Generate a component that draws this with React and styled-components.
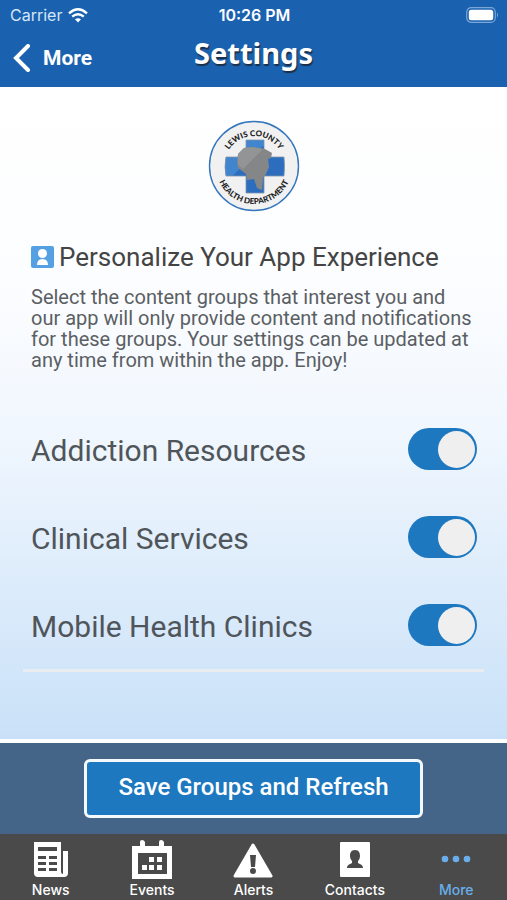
import React, { useState } from "react";
import styled, { createGlobalStyle } from "styled-components";

const color = {
  header: "#1a62b0",
  primary: "#1d78c0",
  panel: "#456588",
  tabbar: "#4a4a4a",
  active: "#69aeea",
  text: "#50555a",
};

const textFont = `Roboto, "Open Sans", sans-serif`;
const titleFont = `"Noto Sans", "Open Sans", sans-serif`;
const systemFont = `Inter, "Liberation Sans", sans-serif`;

const GlobalStyle = createGlobalStyle`
  * {
    box-sizing: border-box;
  }
  body {
    margin: 0;
    font-family: ${textFont};
    color: ${color.text};
  }
`;

const Page = styled.div`
  display: flex;
  flex-direction: column;
  min-height: 100vh;
`;

const Header = styled.header`
  padding-bottom: 8px;
  background: ${color.header};
  color: white;
`;

const StatusBar = styled.div`
  display: grid;
  grid-template-columns: 1fr auto 1fr;
  align-items: center;
  height: 30px;
  padding: 0 8px 0 10px;
  font: 600 16px/30px ${systemFont};
`;

const Carrier = styled.span`
  display: flex;
  align-items: center;
  gap: 6px;
  font-weight: 400;
  color: #d5e6f8;
`;

const Battery = styled.svg`
  justify-self: end;
`;

const NavBar = styled.div`
  display: grid;
  grid-template-columns: 1fr auto 1fr;
  align-items: center;
  height: 49px;
  padding: 0 13px;
`;

const BackButton = styled.button`
  display: flex;
  align-items: center;
  justify-self: start;
  gap: 12px;
  margin-top: 6px;
  padding: 0;
  border: 0;
  background: none;
  color: white;
  font: 700 21px/32px ${textFont};
  cursor: pointer;
`;

const Title = styled.h1`
  margin: 0;
  padding-bottom: 4px;
  font: 700 29px/44px ${titleFont};
  text-shadow: 1px 2px 1px #1c2f48;
`;

const Main = styled.main`
  flex: 1;
  padding: 33px 23px 24px;
  background: linear-gradient(#ffffff 0%, #fcfdff 30%, #f1f7fe 52%, #c9e1f8 100%);
`;

const Seal = styled.svg`
  display: block;
  margin: 0 auto;
`;

const Intro = styled.section`
  padding: 29px 8px 0;
`;

const Heading = styled.h2`
  display: flex;
  align-items: center;
  gap: 5px;
  margin: 0;
  color: #444;
  font: 400 26px/32px ${textFont};
  white-space: nowrap;
`;

const Text = styled.p`
  margin: 14px 0 0;
  color: #5b5f63;
  font: 400 20px/21px ${textFont};
`;

const Groups = styled.div`
  margin-top: 34px;
  border-bottom: 3px solid #e9edf2;
`;

const GroupRow = styled.label`
  display: flex;
  align-items: center;
  justify-content: space-between;
  height: 88px;
  padding: 0 7px 0 8px;
  font: 400 30px/40px ${textFont};
  cursor: pointer;
`;

const GroupName = styled.span`
  padding-top: 3px;
`;

const Switch = styled.input`
  appearance: none;
  display: flex;
  align-items: center;
  width: 69px;
  height: 42px;
  margin: 0;
  padding: 0 2px;
  border-radius: 21px;
  background: #b5bcc4;
  cursor: pointer;

  &::before {
    content: "";
    width: 37px;
    height: 37px;
    border-radius: 50%;
    background: #efefef;
  }

  &:checked {
    justify-content: flex-end;
    background: ${color.primary};
  }
`;

const SavePanel = styled.div`
  display: flex;
  justify-content: center;
  padding: 16px 0;
  border-top: 4px solid white;
  background: ${color.panel};
`;

const SaveButton = styled.button`
  width: 67%;
  height: 59px;
  padding: 0 0 4px;
  border: 3px solid #f4f9fe;
  border-radius: 6px;
  background: ${color.primary};
  color: white;
  font: 500 24px/32px ${textFont};
  cursor: pointer;
`;

const TabBar = styled.nav`
  display: grid;
  grid-template-columns: repeat(5, 1fr);
  height: 66px;
  background: ${color.tabbar};
`;

const Tab = styled.a`
  display: flex;
  flex-direction: column;
  align-items: center;
  gap: 1px;
  padding-top: 5px;
  color: ${(props) => (props.$active ? color.active : "#fff")};
  font: 500 14px/16px ${systemFont};
  text-decoration: none;
`;

function CountySeal() {
  return (
    <Seal width="92" height="92" viewBox="0 0 92 92" role="img" aria-label="Lewis County Health Department">
      <defs>
        <path id="sealTop" d="M16 46a30 30 0 0 1 60 0" />
        <path id="sealBottom" d="M8 46a38 38 0 0 0 76 0" />
        <clipPath id="sealCross">
          <path d="M38 20h18v17h20q1 9 0 19H56v17H38V56H18q-2-9 0-19h20z" />
        </clipPath>
      </defs>
      <circle cx="46" cy="46" r="44.5" fill="#f1f1f2" stroke="#3476bd" strokeWidth="1.4" />
      <g clipPath="url(#sealCross)">
        <path d="M10 15h72v60H10z" fill="#2c6ebd" />
        <path d="M10 15h56L10 70z" fill="#4285cf" />
      </g>
      <path
        d="M38 20h18v17h20q1 9 0 19H56v17H38V56H18q-2-9 0-19h20z"
        fill="none"
        stroke="#8296aa"
        strokeWidth="0.8"
      />
      <path
        d="M30 34l6-6 8-1 13 2 7 4-1 5-3 1 1 8-3 7-3 4-1 12-5-2-3-9-7 1-1-6-8-6-1-6z"
        fill="#858688"
      />
      <path d="M30 34l6-6 8-1 11 2-20 20-5-4z" fill="#929496" />
      <g fill="#202020" fontFamily="Lato, sans-serif" fontSize="8" fontWeight="900" textAnchor="middle">
        <text>
          <textPath href="#sealTop" startOffset="50%">LEWIS COUNTY</textPath>
        </text>
        <text>
          <textPath href="#sealBottom" startOffset="50%">HEALTH DEPARTMENT</textPath>
        </text>
      </g>
    </Seal>
  );
}

const NewsIcon = () => (
  <svg width="36" height="42" viewBox="0 0 36 42">
    <path fill="#fff" d="M1 3h27v29q0 3 2 3v-23h5v22q0 4-4 4H5q-4 0-4-4z" />
    <path
      fill={color.tabbar}
      d="M5 8h19v4H5zM5 17h8v3H5zM16 17h8v3h-8zM5 23h8v3H5zM16 23h8v3h-8zM5 29h8v3H5zM16 29h8v3h-8z"
    />
  </svg>
);

const EventsIcon = () => (
  <svg width="40" height="42" viewBox="0 0 40 42">
    <path fill="#fff" d="M0 7h8V3q0-2 2-2t3 2v4h14V3q0-2 2-2t3 2v4h8v33H0z" />
    <path fill={color.tabbar} d="M6 14h29v21H6z" />
    <path fill="#fff" d="M17 18h5v5h-5zM25 18h5v5h-5zM10 26h5v5h-5zM17 26h5v5h-5zM25 26h5v5h-5z" />
  </svg>
);

const AlertsIcon = () => (
  <svg width="40" height="42" viewBox="0 0 40 42">
    <path fill="#fff" stroke="#fff" strokeWidth="3" strokeLinejoin="round" d="M20 6l18 31H2z" />
    <path fill={color.tabbar} d="M17 16h6l-1 12h-4z" />
    <circle cx="20" cy="32" r="3" fill={color.tabbar} />
  </svg>
);

const ContactsIcon = () => (
  <svg width="30" height="42" viewBox="0 0 30 42">
    <rect y="3" width="30" height="35" rx="1" fill="#fff" />
    <path
      fill={color.tabbar}
      d="M15 11c4 0 5 3 5 6 0 2-1 4-2 5v2c1 1 5 1 5 5H7c0-4 4-4 5-5v-2c-1-1-2-3-2-5 0-3 1-6 5-6z"
    />
  </svg>
);

const MoreIcon = () => (
  <svg width="30" height="42" viewBox="0 0 30 42" fill={color.active}>
    <circle cx="4" cy="20" r="3.3" />
    <circle cx="15" cy="20" r="3.3" />
    <circle cx="26" cy="20" r="3.3" />
  </svg>
);

const tabs = [
  { label: "News", icon: <NewsIcon /> },
  { label: "Events", icon: <EventsIcon /> },
  { label: "Alerts", icon: <AlertsIcon /> },
  { label: "Contacts", icon: <ContactsIcon /> },
  { label: "More", icon: <MoreIcon />, active: true },
];

export default function App() {
  const [groups, setGroups] = useState({
    "Addiction Resources": true,
    "Clinical Services": true,
    "Mobile Health Clinics": true,
  });

  const toggle = (name) => setGroups({ ...groups, [name]: !groups[name] });

  return (
    <Page>
      <GlobalStyle />
      <Header>
        <StatusBar>
          <Carrier>
            Carrier
            <svg width="20" height="15" viewBox="0 0 20 15" fill="none" stroke="#fff" strokeWidth="2.4">
              <path d="M1 5.3q9-8 18 0M4.2 8.7q5.8-5 11.6 0" />
              <path d="M10 14.5l-3-3.2q3-2.2 6 0z" fill="#fff" stroke="none" />
            </svg>
          </Carrier>
          <span>10:26 PM</span>
          <Battery width="33" height="16" viewBox="0 0 33 16">
            <rect x="0.7" y="0.7" width="28.6" height="14.6" rx="4.5" fill="none" stroke="#7ba6d8" strokeWidth="1.2" />
            <rect x="2.8" y="2.8" width="24.4" height="10.4" rx="2.5" fill="#fff" />
            <path d="M31 5.5q2 2.5 0 5z" fill="#7ba6d8" />
          </Battery>
        </StatusBar>
        <NavBar>
          <BackButton type="button">
            <svg width="18" height="28" viewBox="0 0 18 28" fill="none" stroke="#fff" strokeWidth="4">
              <path d="M15 2L3 14l12 12" strokeLinecap="round" />
            </svg>
            More
          </BackButton>
          <Title>Settings</Title>
        </NavBar>
      </Header>
      <Main>
        <CountySeal />
        <Intro>
          <Heading>
            <svg width="23" height="22" viewBox="0 0 23 22">
              <rect width="23" height="22" rx="2" fill="#559fe3" />
              <circle cx="11.5" cy="7.5" r="4.5" fill="#fff" />
              <path d="M6 19q0-6 5.5-6t5.5 6z" fill="#fff" />
            </svg>
            Personalize Your App Experience
          </Heading>
          <Text>
            Select the content groups that interest you and our app will only provide content and notifications for
            these groups. Your settings can be updated at any time from within the app. Enjoy!
          </Text>
        </Intro>
        <Groups>
          {Object.keys(groups).map((name) => (
            <GroupRow key={name}>
              <GroupName>{name}</GroupName>
              <Switch type="checkbox" role="switch" checked={groups[name]} onChange={() => toggle(name)} />
            </GroupRow>
          ))}
        </Groups>
      </Main>
      <SavePanel>
        <SaveButton type="button">Save Groups and Refresh</SaveButton>
      </SavePanel>
      <TabBar>
        {tabs.map((tab) => (
          <Tab key={tab.label} href={"#" + tab.label.toLowerCase()} $active={tab.active}>
            {tab.icon}
            {tab.label}
          </Tab>
        ))}
      </TabBar>
    </Page>
  );
}
